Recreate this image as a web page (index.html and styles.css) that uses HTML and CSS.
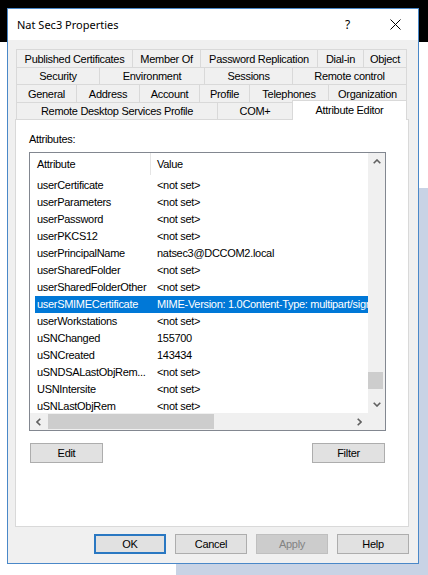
FILE: index.html
```html
<!DOCTYPE html>
<html>
<head>
<meta charset="utf-8">
<link rel="stylesheet" href="styles.css">
</head>
<body>
<div class="window">
  <div class="titlebar">
    <span class="title">Nat Sec3 Properties</span>
    <span class="tbtn help">?</span>
    <span class="tbtn close"><svg width="11" height="11" viewBox="0 0 11 11"><path d="M0.5 0.5 L10.5 10.5 M10.5 0.5 L0.5 10.5" stroke="#000" stroke-width="1" fill="none"/></svg></span>
  </div>
  <div class="content">
    <div class="tabs">
      <div class="tabrow r1">
        <div class="tab">Published Certificates</div>
        <div class="tab">Member Of</div>
        <div class="tab">Password Replication</div>
        <div class="tab">Dial-in</div>
        <div class="tab">Object</div>
      </div>
      <div class="tabrow r2">
        <div class="tab">Security</div>
        <div class="tab">Environment</div>
        <div class="tab">Sessions</div>
        <div class="tab">Remote control</div>
      </div>
      <div class="tabrow r3">
        <div class="tab">General</div>
        <div class="tab">Address</div>
        <div class="tab">Account</div>
        <div class="tab">Profile</div>
        <div class="tab">Telephones</div>
        <div class="tab">Organization</div>
      </div>
      <div class="tabrow r4">
        <div class="tab">Remote Desktop Services Profile</div>
        <div class="tab">COM+</div>
        <div class="tab active">Attribute Editor</div>
      </div>
    </div>
    <div class="panel">
      <div class="label">Attributes:</div>
      <div class="list">
        <div class="viewport">
          <div class="header">
            <div class="hcol name">Attribute</div>
            <div class="hcol value">Value</div>
          </div>
          <div class="rows">
            <div class="row"><span class="c1">userCertificate</span><span class="c2">&lt;not set&gt;</span></div>
            <div class="row"><span class="c1">userParameters</span><span class="c2">&lt;not set&gt;</span></div>
            <div class="row"><span class="c1">userPassword</span><span class="c2">&lt;not set&gt;</span></div>
            <div class="row"><span class="c1">userPKCS12</span><span class="c2">&lt;not set&gt;</span></div>
            <div class="row"><span class="c1">userPrincipalName</span><span class="c2">natsec3@DCCOM2.local</span></div>
            <div class="row"><span class="c1">userSharedFolder</span><span class="c2">&lt;not set&gt;</span></div>
            <div class="row"><span class="c1">userSharedFolderOther</span><span class="c2">&lt;not set&gt;</span></div>
            <div class="row sel"><span class="c1">userSMIMECertificate</span><span class="c2">MIME-Version: 1.0Content-Type: multipart/signed</span></div>
            <div class="row"><span class="c1">userWorkstations</span><span class="c2">&lt;not set&gt;</span></div>
            <div class="row"><span class="c1">uSNChanged</span><span class="c2">155700</span></div>
            <div class="row"><span class="c1">uSNCreated</span><span class="c2">143434</span></div>
            <div class="row"><span class="c1">uSNDSALastObjRem...</span><span class="c2">&lt;not set&gt;</span></div>
            <div class="row"><span class="c1">USNIntersite</span><span class="c2">&lt;not set&gt;</span></div>
            <div class="row"><span class="c1">uSNLastObjRem</span><span class="c2">&lt;not set&gt;</span></div>
          </div>
        </div>
        <div class="vscroll">
          <div class="arrow"><svg width="8" height="5" viewBox="0 0 8 5"><path d="M0.7 4.3 L4 1 L7.3 4.3" stroke="#606060" stroke-width="1.6" fill="none"/></svg></div>
          <div class="vtrack"><div class="vthumb"></div></div>
          <div class="arrow"><svg width="8" height="5" viewBox="0 0 8 5"><path d="M0.7 0.7 L4 4 L7.3 0.7" stroke="#606060" stroke-width="1.6" fill="none"/></svg></div>
        </div>
        <div class="hscroll">
          <div class="harrow"><svg width="5" height="8" viewBox="0 0 5 8"><path d="M4.3 0.7 L1 4 L4.3 7.3" stroke="#606060" stroke-width="1.6" fill="none"/></svg></div>
          <div class="htrack"><div class="hthumb"></div></div>
          <div class="harrow"><svg width="5" height="8" viewBox="0 0 5 8"><path d="M0.7 0.7 L4 4 L0.7 7.3" stroke="#606060" stroke-width="1.6" fill="none"/></svg></div>
        </div>
        <div class="corner"></div>
      </div>
      <div class="actions">
        <div class="btn">Edit</div>
        <div class="btn">Filter</div>
      </div>
    </div>
    <div class="footer">
      <div class="btn fbtn default">OK</div>
      <div class="btn fbtn">Cancel</div>
      <div class="btn fbtn disabled">Apply</div>
      <div class="btn fbtn">Help</div>
    </div>
  </div>
</div>
</body>
</html>
```
FILE: styles.css
```css
html, body {
  margin: 0;
  padding: 0;
}
body {
  width: 428px;
  height: 575px;
  overflow: hidden;
  font-family: "Liberation Sans", Arial, sans-serif;
  font-size: 11px;
  letter-spacing: -0.3px;
  color: #000;
  background:
    linear-gradient(#000, #000) 0 0 / 100% 42px no-repeat,
    linear-gradient(#c8d3e5, #c8d3e5) 176px 188px / 100% 100% no-repeat,
    #ffffff;
}
.window {
  margin: 8px 0 0 7px;
  width: 412px;
  height: 556px;
  box-sizing: border-box;
  border: 1px solid #4a88c8;
  background: #f0f0f0;
  display: flex;
  flex-direction: column;
}
.titlebar {
  height: 31px;
  flex: none;
  background: #fff;
  display: flex;
  align-items: center;
  padding-left: 9px;
}
.title {
  font-family: "Noto Sans", "Open Sans", sans-serif;
  font-size: 11px;
  letter-spacing: 0;
  flex: 1;
}
.tbtn {
  width: 46px;
  height: 31px;
  display: flex;
  align-items: center;
  justify-content: center;
}
.help {
  font-family: "Noto Sans", sans-serif;
  font-size: 12px;
  letter-spacing: 0;
  padding-right: 3px;
  box-sizing: border-box;
}
.content {
  padding: 9px 9px 0 7px;
  display: flex;
  flex-direction: column;
}
.tabs {
  margin-left: 1px;
  width: 391px;
  display: flex;
  flex-direction: column;
}
.tabrow {
  display: grid;
}
.r1, .r3 { height: 18px; }
.r2, .r4 { height: 17px; }
.r1 { grid-template-columns: 116px 68px 117px 46px 44px; }
.r2 { grid-template-columns: 83px 105px 88px 115px; }
.r3 { grid-template-columns: 60px 63px 60px 50px 79px 79px; }
.r4 { grid-template-columns: 201px 75px 115px; }
.tab {
  box-sizing: border-box;
  border-top: 1px solid #d9d9d9;
  border-left: 1px solid #d9d9d9;
  display: flex;
  align-items: center;
  justify-content: center;
  white-space: nowrap;
  background: #f0f0f0;
}
.tab:last-child {
  border-right: 1px solid #d9d9d9;
}
.tab.active {
  background: #fff;
  margin-top: -2px;
  margin-bottom: -1px;
  position: relative;
  z-index: 1;
  padding-bottom: 2px;
}
.panel {
  width: 394px;
  height: 408px;
  box-sizing: border-box;
  border: 1px solid #d9d9d9;
  background: #fff;
  padding: 13px 13px 0 13px;
}
.label {
  line-height: 13px;
  height: 13px;
  margin-bottom: 6px;
}
.list {
  width: 357px;
  height: 279px;
  box-sizing: border-box;
  border: 1px solid #828790;
  display: grid;
  grid-template-columns: 338px 17px;
  grid-template-rows: 260px 17px;
}
.viewport {
  overflow: hidden;
}
.header {
  height: 22px;
  display: flex;
  align-items: center;
}
.hcol.name {
  width: 113px;
  padding-left: 7px;
  border-right: 1px solid #e5e5e5;
  height: 22px;
  line-height: 22px;
}
.hcol.value {
  padding-left: 6px;
}
.rows {
  padding-top: 2px;
  padding-left: 5px;
}
.row {
  height: 17px;
  line-height: 17px;
  display: flex;
  white-space: nowrap;
  width: 500px;
}
.row .c1 {
  width: 120px;
  padding-left: 2px;
  flex: none;
}
.row.sel {
  background: #0078d7;
  color: #fff;
}
.vscroll {
  background: #f0f0f0;
  display: flex;
  flex-direction: column;
}
.arrow {
  height: 17px;
  flex: none;
  display: flex;
  align-items: center;
  justify-content: center;
}
.vtrack {
  flex: 1;
  padding-top: 202px;
}
.vthumb {
  width: 15px;
  height: 17px;
  background: #cdcdcd;
}
.hscroll {
  background: #f0f0f0;
  display: flex;
}
.harrow {
  width: 17px;
  flex: none;
  display: flex;
  align-items: center;
  justify-content: center;
}
.htrack {
  flex: 1;
  padding: 1px 0 0 1px;
}
.hthumb {
  width: 166px;
  height: 15px;
  background: #cdcdcd;
}
.corner {
  background: #f0f0f0;
}
.actions {
  margin-top: 12px;
  padding: 0 1px;
  width: 355px;
  display: flex;
  justify-content: space-between;
}
.btn {
  width: 73px;
  height: 20px;
  box-sizing: border-box;
  border: 1px solid #adadad;
  background: #e1e1e1;
  display: flex;
  align-items: center;
  justify-content: center;
}
.footer {
  margin-top: 7px;
  display: flex;
  justify-content: flex-end;
  gap: 9px;
}
.fbtn {
  width: 72px;
}
.fbtn.default {
  border: 2px solid #2a78c2;
}
.fbtn.disabled {
  background: #cccccc;
  border-color: #bfbfbf;
  color: #838383;
}
```
